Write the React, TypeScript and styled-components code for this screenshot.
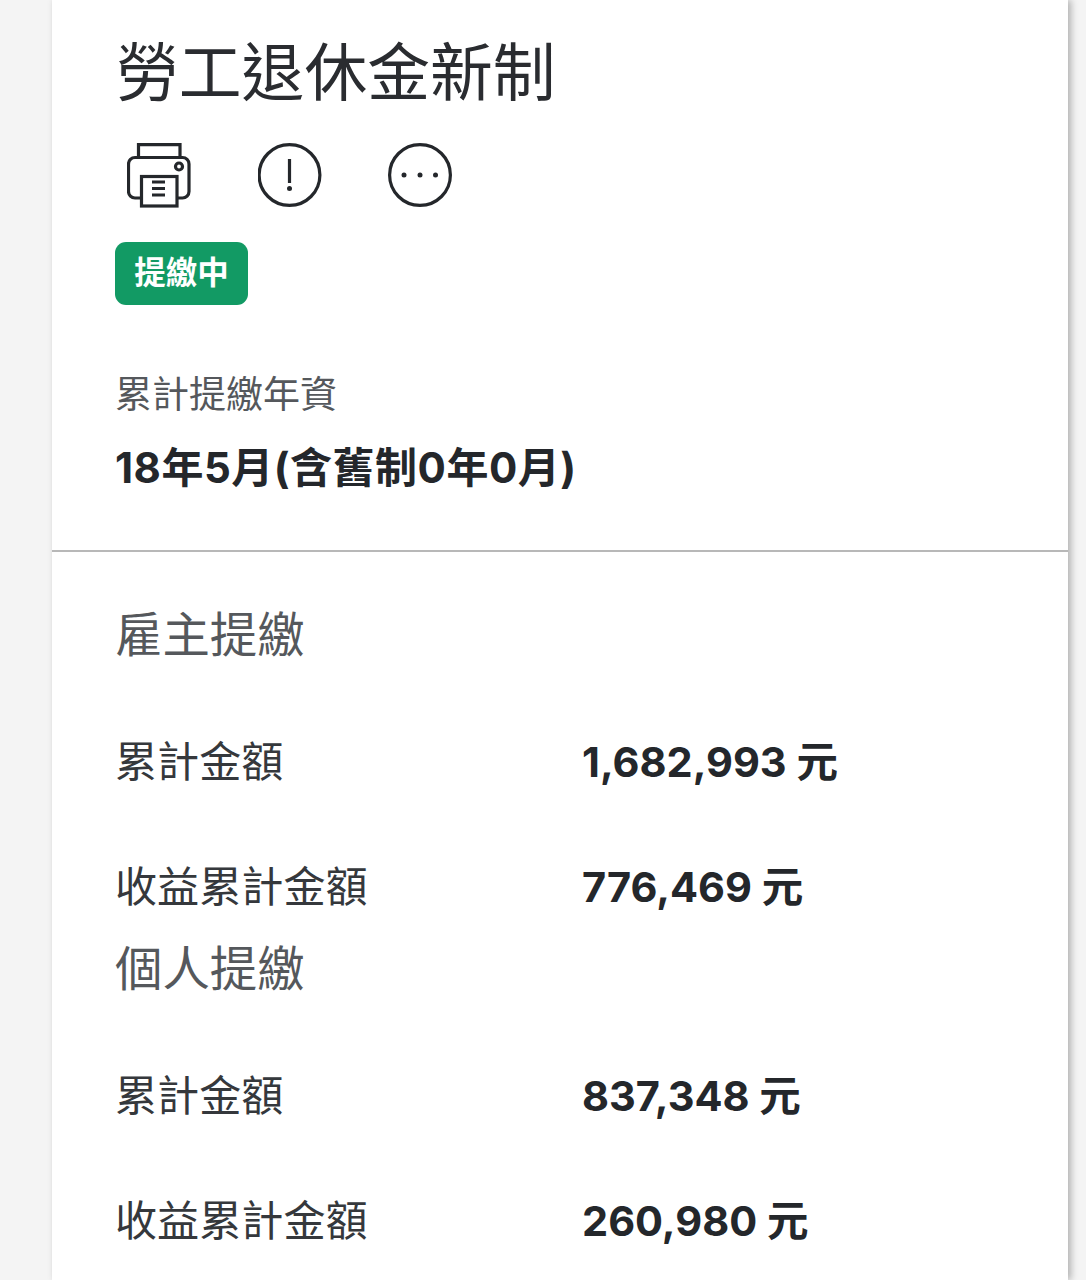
import React from "react";
import styled, { createGlobalStyle } from "styled-components";

const GlobalStyle = createGlobalStyle`
	html, body {
		margin: 0;
		padding: 0;
		height: 1280px;
		overflow: hidden;
		background: #f4f4f4;
		font-family: Inter, "Noto Sans CJK TC", sans-serif;
	}
`;

const Page = styled.div`
	width: 1086px;
	height: 1280px;
	overflow: hidden;
	background: #f4f4f4;
	padding-left: 52px;
	box-sizing: border-box;
`;
const Card = styled.div`
	width: 1016px;
	height: 1280px;
	background: #fff;
	box-shadow: 3px 0 7px rgba(0, 0, 0, 0.28);
`;
const Header = styled.div`
	height: 552px;
	box-sizing: border-box;
	padding: 27px 64px 0 63px;
	border-bottom: 2px solid #b8b8b8;
`;
const Title = styled.h1`
	margin: 0 0 0 1px;
	font-size: 62.8px;
	line-height: 90px;
	font-weight: 400;
	color: #2a2c30;
`;
const IconRow = styled.div`
	display: flex;
	gap: 65.5px;
	margin-top: 26px;
	margin-left: 12px;
`;
const IconBox = styled.svg`
	width: 65px;
	height: 65px;
	display: block;
	color: #24272b;
`;
const Badge = styled.div`
	width: 133px;
	height: 63px;
	margin-top: 34px;
	border-radius: 11px;
	background: #129a64;
	color: #fff;
	font-size: 31.5px;
	font-weight: 700;
	line-height: 61px;
	text-align: center;
`;
const Label = styled.div`
	margin-top: 65px;
	font-size: 37px;
	line-height: 50px;
	color: #55585c;
`;
const Seniority = styled.div`
	margin-top: 23px;
	font-size: 42px;
	line-height: 50px;
	font-weight: 700;
	letter-spacing: 0.5px;
	color: #24272b;
`;
const Body = styled.div`
	padding: 51px 64px 0 63px;
`;
const Section = styled.section`
	& + & {
		margin-top: 20px;
	}
`;
const SectionTitle = styled.h2`
	margin: 0 0 65px;
	font-size: 47.4px;
	line-height: 64px;
	font-weight: 400;
	color: #55585c;
`;
const Row = styled.div`
	display: grid;
	grid-template-columns: 467px 1fr;
	align-items: center;
	height: 60px;
	& + & {
		margin-top: 65px;
	}
`;
const RowLabel = styled.div`
	font-size: 42.1px;
	line-height: 60px;
	color: #35383c;
`;
const RowValue = styled.div`
	font-size: 41.5px;
	line-height: 60px;
	font-weight: 700;
	color: #24272b;
`;

const PrinterIcon = () => (
	<IconBox viewBox="0 0 65 65" fill="none" stroke="currentColor" strokeWidth="3.2">
		<path d="M11.5 14V1.6H53V14" />
		<path d="M14.5 55H8a6.5 6.5 0 0 1-6.500-6.500V21A6.500 6.500 0 0 1 8 14.500h47.500A6.500 6.500 0 0 1 62 21v27.500a6.500 6.500 0 0 1-6.500 6.500H50" />
		<rect x="14.500" y="33.500" width="35.500" height="29.500" />
		<circle cx="52" cy="23.500" r="3.500" />
		<path d="M25 39h13M25 45.500h13M25 52h13" />
	</IconBox>
);

const AlertIcon = () => (
	<IconBox viewBox="0 0 65 65" fill="none" stroke="currentColor" strokeWidth="3.2">
		<circle cx="31.500" cy="32" r="30.400" />
		<path d="M31.500 16v24" />
		<circle cx="31.500" cy="45.500" r="2.500" fill="currentColor" stroke="none" />
	</IconBox>
);

const MoreIcon = () => (
	<IconBox viewBox="0 0 65 65" fill="none" stroke="currentColor" strokeWidth="3.2">
		<circle cx="32" cy="32" r="30.400" />
		<circle cx="16" cy="32" r="2.500" fill="currentColor" stroke="none" />
		<circle cx="32" cy="32" r="2.500" fill="currentColor" stroke="none" />
		<circle cx="47.500" cy="32" r="2.500" fill="currentColor" stroke="none" />
	</IconBox>
);

const sections = [
	{
		title: "雇主提繳",
		rows: [
			{ label: "累計金額", value: "1,682,993 元" },
			{ label: "收益累計金額", value: "776,469 元" },
		],
	},
	{
		title: "個人提繳",
		rows: [
			{ label: "累計金額", value: "837,348 元" },
			{ label: "收益累計金額", value: "260,980 元" },
		],
	},
];

const App = () => {
	return (
		<Page>
			<GlobalStyle />
			<Card>
				<Header>
					<Title>勞工退休金新制</Title>
					<IconRow>
						<PrinterIcon />
						<AlertIcon />
						<MoreIcon />
					</IconRow>
					<Badge>提繳中</Badge>
					<Label>累計提繳年資</Label>
					<Seniority>18年5月(含舊制0年0月)</Seniority>
				</Header>
				<Body>
					{sections.map((section) => (
						<Section key={section.title}>
							<SectionTitle>{section.title}</SectionTitle>
							{section.rows.map((row) => (
								<Row key={row.label}>
									<RowLabel>{row.label}</RowLabel>
									<RowValue>{row.value}</RowValue>
								</Row>
							))}
						</Section>
					))}
				</Body>
			</Card>
		</Page>
	);
};

export default App;
